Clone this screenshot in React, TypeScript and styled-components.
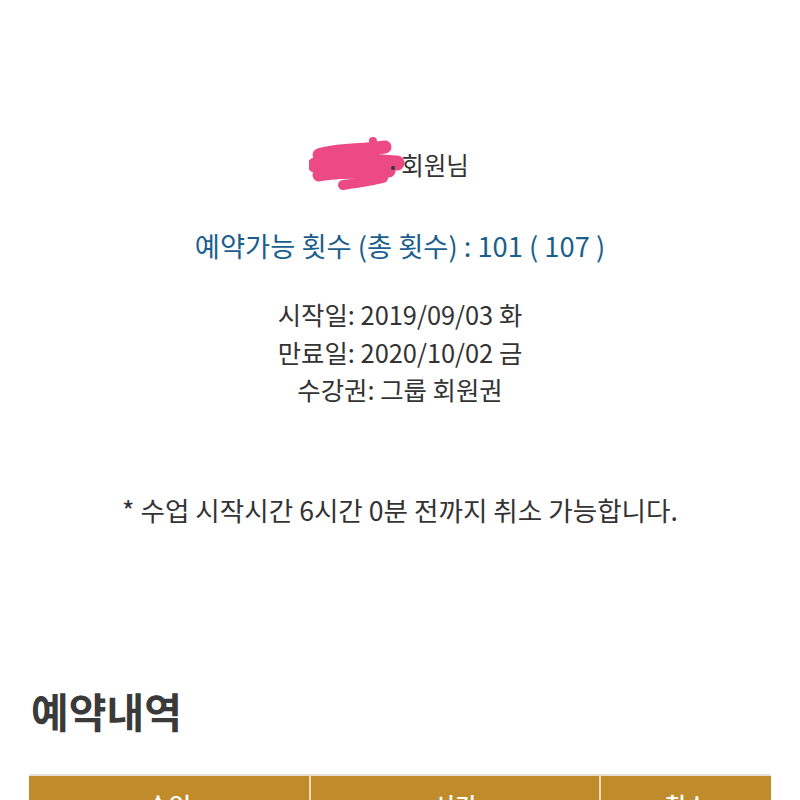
import React from 'react';
import styled, { createGlobalStyle } from 'styled-components';

const GlobalStyle = createGlobalStyle`
  html, body {
    margin: 0;
    padding: 0;
    background: #ffffff;
  }
  body {
    font-family: "Noto Sans CJK KR", "Noto Sans", sans-serif;
    color: #333333;
  }
`;

const Page = styled.div`
  padding: 150px 29px 0;
`;

const Summary = styled.section`
  display: flex;
  flex-direction: column;
  align-items: center;
  text-align: center;
`;

const MemberLine = styled.div`
  font-size: 24.5px;
  line-height: 30px;
  color: #333;
  display: flex;
  align-items: center;
  margin-right: 22px;
`;

const Scribble = styled.svg`
  width: 96px;
  height: 60px;
  margin: -15px -4px -15px 0;
`;

const Quota = styled.div`
  margin-top: 50px;
  font-size: 27.3px;
  line-height: 30px;
  color: #1a5e8e;
`;

const Dates = styled.div`
  margin-top: 36px;
  font-size: 25.4px;
  line-height: 37.5px;
  color: #333;
`;

const Notice = styled.p`
  margin: 86px 0 0;
  font-size: 26.6px;
  line-height: 30px;
  color: #333;
`;

const Heading = styled.h2`
  margin: 160px 0 0;
  padding-left: 2px;
  font-size: 41px;
  line-height: 50px;
  font-weight: 700;
  color: #3a3a3a;
`;

const Table = styled.table`
  margin-top: 39px;
  width: 100%;
  border-collapse: collapse;
  border-top: 2px solid #e6e0d4;
`;

const Th = styled.th<{ w: number }>`
  width: ${({ w }) => w}px;
  height: 56px;
  background: #c08b2b;
  color: #ffffff;
  font-size: 24px;
  font-weight: 500;
  text-align: center;
  border-left: 2px solid #f0dcb4;
  &:first-child {
    border-left: none;
  }
`;

const Td = styled.td`
  padding: 14px 10px;
  text-align: center;
  font-size: 20px;
  border-bottom: 1px solid #ddd;
`;

export default function App() {
  return (
    <>
      <GlobalStyle />
      <Page>
        <Summary>
          <MemberLine>
            <Scribble viewBox="0 0 96 60">
              <g fill="none" stroke="#ec4a82" strokeLinecap="round" strokeLinejoin="round">
                <path d="M10 20 C28 14, 50 16, 76 12" strokeWidth="13" />
                <path d="M6 30 C30 24, 58 26, 88 28" strokeWidth="15" />
                <path d="M10 40 C30 36, 52 38, 80 36" strokeWidth="13" />
                <path d="M34 50 C48 48, 62 46, 74 43" strokeWidth="10" />
                <path d="M64 6 L68 32" strokeWidth="8" />
              </g>
              <circle cx="84" cy="33" r="2" fill="#333" />
            </Scribble>
            회원님
          </MemberLine>
          <Quota>예약가능 횟수 (총 횟수) : 101 ( 107 )</Quota>
          <Dates>
            <div>시작일: 2019/09/03 화</div>
            <div>만료일: 2020/10/02 금</div>
            <div>수강권: 그룹 회원권</div>
          </Dates>
          <Notice>* 수업 시작시간 6시간 0분 전까지 취소 가능합니다.</Notice>
        </Summary>
        <Heading>예약내역</Heading>
        <Table>
          <thead>
            <tr>
              <Th w={282}>수업</Th>
              <Th w={290}>시간</Th>
              <Th w={170}>취소</Th>
            </tr>
          </thead>
          <tbody>
            <tr>
              <Td>-</Td>
              <Td>-</Td>
              <Td>-</Td>
            </tr>
          </tbody>
        </Table>
      </Page>
    </>
  );
}
